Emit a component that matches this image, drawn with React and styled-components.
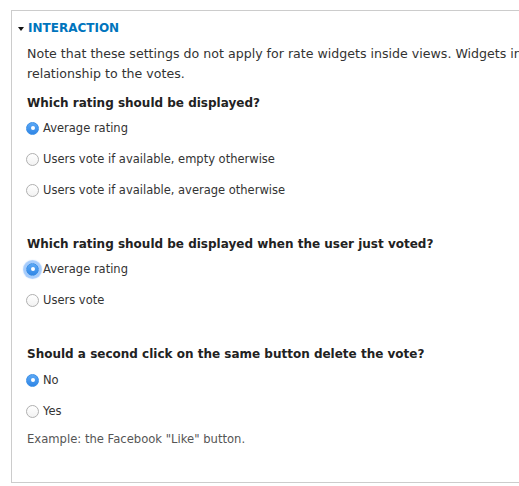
import React, { useState } from "react";
import styled, { createGlobalStyle } from "styled-components";

const GlobalStyle = createGlobalStyle`
  html, body {
    margin: 0;
    padding: 0;
    background: #fff;
  }
  body {
    font-family: "DejaVu Sans", "Liberation Sans", sans-serif;
    color: #222;
  }
`;

const Page = styled.div`
  width: 519px;
  height: 486px;
  overflow: hidden;
  padding: 10px 0 0 11px;
  box-sizing: border-box;
`;

const Fieldset = styled.section`
  width: 900px;
  border: 1px solid #cccccc;
  border-right: none;
  padding: 7px 0 33px 0;
  box-sizing: border-box;
`;

const Summary = styled.div`
  display: flex;
  align-items: center;
  height: 20px;
  padding-left: 6px;
  gap: 4px;
`;

const Arrow = styled.span`
  width: 0;
  height: 0;
  border-left: 3px solid transparent;
  border-right: 3px solid transparent;
  border-top: 4px solid #111;
  margin-top: 1px;
`;

const Title = styled.span`
  font-size: 12px;
  font-weight: bold;
  color: #0074bd;
  text-transform: uppercase;
`;

const Body = styled.div`
  padding-left: 15px;
`;

const Description = styled.p`
  margin: 6px 0 0 0;
  font-size: 12.6px;
  line-height: 20px;
  color: #333;
  white-space: nowrap;
`;

const Group = styled.div`
  margin-top: ${(p) => p.$top}px;
`;

const Heading = styled.div`
  font-size: 12px;
  font-weight: bold;
  line-height: 20px;
  color: #222;
`;

const Options = styled.div`
  display: flex;
  flex-direction: column;
  gap: 11px;
  margin-top: ${(p) => p.$top}px;
`;

const Option = styled.label`
  display: flex;
  align-items: center;
  height: 20px;
  font-size: 11.5px;
  color: #333;
  cursor: pointer;
`;

const Radio = styled.span`
  width: 13px;
  height: 13px;
  box-sizing: border-box;
  border-radius: 50%;
  margin: 0 4px 0 -1px;
  display: flex;
  align-items: center;
  justify-content: center;
  flex-shrink: 0;
  border: 1px solid ${(p) => (p.$checked ? "#3a8ee6" : "#b0b0b0")};
  background: ${(p) =>
    p.$checked ? "linear-gradient(#5ca8f5, #2f86e6)" : "linear-gradient(#fff, #f2f2f2)"};
  box-shadow: ${(p) => (p.$focus ? "0 0 1px 3px rgba(90, 160, 250, 0.55)" : "none")};

  &::after {
    content: "";
    width: 4px;
    height: 4px;
    border-radius: 50%;
    background: #fff;
    display: ${(p) => (p.$checked ? "block" : "none")};
  }
`;

const Hint = styled.div`
  margin-top: 8px;
  font-size: 11.6px;
  line-height: 20px;
  color: #555;
`;

const RadioGroup = ({ options, value, onChange, focus, top = 5 }) => (
  <Options $top={top}>
    {options.map((o) => (
      <Option key={o} onClick={() => onChange(o)}>
        <Radio $checked={value === o} $focus={focus && value === o} />
        {o}
      </Option>
    ))}
  </Options>
);

export default function App() {
  const [display, setDisplay] = useState("Average rating");
  const [justVoted, setJustVoted] = useState("Average rating");
  const [secondClick, setSecondClick] = useState("No");

  return (
    <Page>
      <GlobalStyle />
      <Fieldset>
        <Summary>
          <Arrow />
          <Title>Interaction</Title>
        </Summary>
        <Body>
          <Description>
            Note that these settings do not apply for rate widgets inside views. Widgets in
            views display the average rating unless a vote has a
            <br />
            relationship to the votes.
          </Description>
          <Group $top={9}>
            <Heading>Which rating should be displayed?</Heading>
            <RadioGroup
              options={[
                "Average rating",
                "Users vote if available, empty otherwise",
                "Users vote if available, average otherwise",
              ]}
              value={display}
              onChange={setDisplay}
            />
          </Group>
          <Group $top={34}>
            <Heading>Which rating should be displayed when the user just voted?</Heading>
            <RadioGroup
              options={["Average rating", "Users vote"]}
              value={justVoted}
              onChange={setJustVoted}
              focus
            />
          </Group>
          <Group $top={34}>
            <Heading>Should a second click on the same button delete the vote?</Heading>
            <RadioGroup
              options={["No", "Yes"]}
              value={secondClick}
              onChange={setSecondClick}
              top={6}
            />
            <Hint>Example: the Facebook "Like" button.</Hint>
          </Group>
        </Body>
      </Fieldset>
    </Page>
  );
}
